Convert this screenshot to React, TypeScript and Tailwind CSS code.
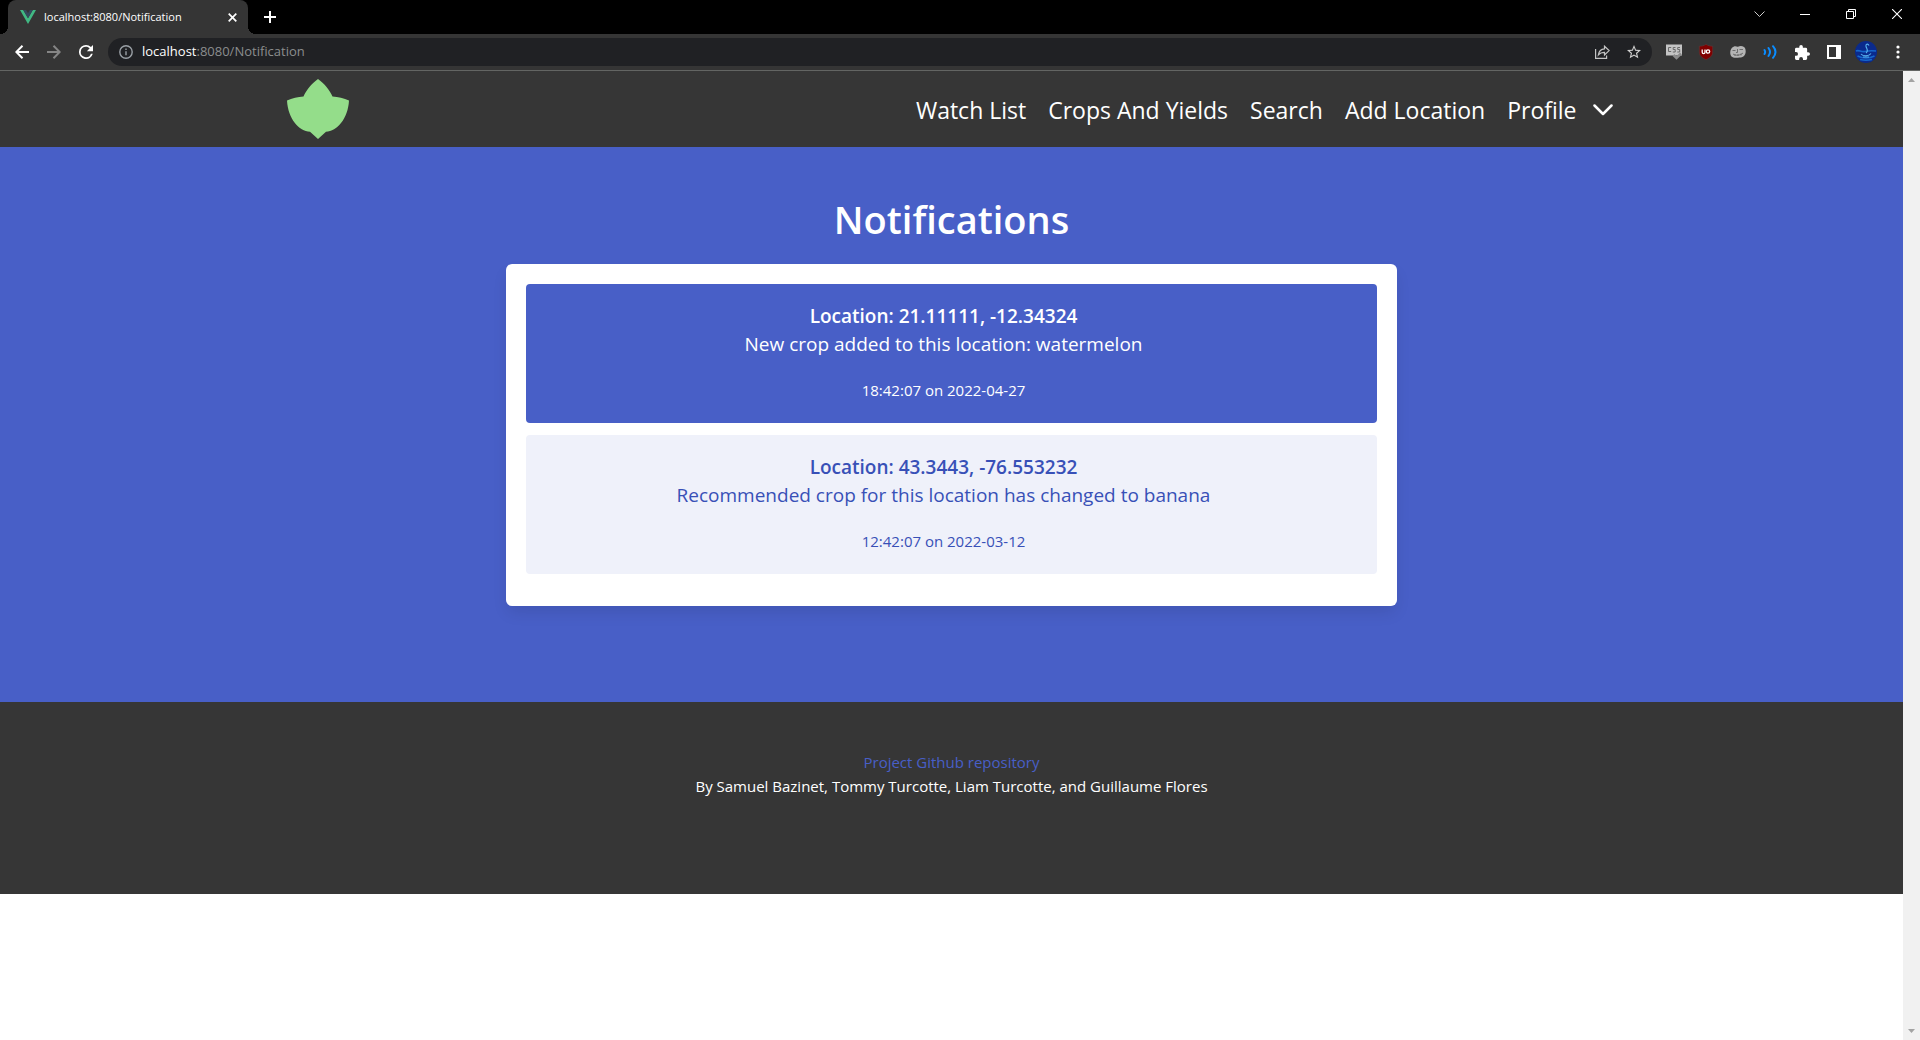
import React from "react";

function VueLogo() {
  return (
    <svg width="16" height="14" viewBox="0 0 16 14" aria-hidden="true">
      <path d="M0 0h3.2L8 8.3 12.8 0H16L8 14z" fill="#41b883" />
      <path d="M3.2 0H6.1L8 3.3 9.9 0h2.9L8 8.3z" fill="#35495e" />
    </svg>
  );
}

function TitleBar() {
  return (
    <header className="flex h-[34px] items-stretch bg-black text-white">
      <div className="relative ml-2 flex w-60 items-center rounded-t-lg bg-[#353535] pl-3">
        <span className="absolute -left-2 bottom-0 size-2 bg-[radial-gradient(circle_at_top_left,#000_8px,#353535_8px)]" />
        <span className="absolute -right-2 bottom-0 size-2 bg-[radial-gradient(circle_at_top_right,#000_8px,#353535_8px)]" />
        <VueLogo />
        <span className="ml-2 flex-1 text-[11px]">localhost:8080/Notification</span>
        <button aria-label="Close tab" className="mr-2 flex size-4 items-center justify-center">
          <svg width="9" height="9" viewBox="0 0 9 9" stroke="#fff" strokeWidth="1.7">
            <path d="M.7.7l7.6 7.6M8.3.7L.7 8.3" />
          </svg>
        </button>
      </div>
      <button aria-label="New tab" className="ml-3 flex w-5 items-center justify-center">
        <svg width="12" height="12" viewBox="0 0 12 12" stroke="#fff" strokeWidth="2">
          <path d="M6 0v12M0 6h12" />
        </svg>
      </button>
      <div className="ml-auto flex h-7 items-center">
        <button aria-label="Search tabs" className="flex w-[46px] justify-center">
          <svg width="11" height="6" viewBox="0 0 11 6" fill="none" stroke="#ccc">
            <path d="M.5.5l5 5 5-5" />
          </svg>
        </button>
        <button aria-label="Minimize" className="flex w-[46px] justify-center">
          <span className="h-px w-2.5 bg-white" />
        </button>
        <button aria-label="Restore" className="flex w-[46px] justify-center">
          <svg width="10" height="10" viewBox="0 0 10 10" fill="none" stroke="#fff">
            <path d="M.5 2.5h7v7h-7zM2.5 2.5v-2h7v7h-2" />
          </svg>
        </button>
        <button aria-label="Close" className="flex w-[46px] justify-center">
          <svg width="10" height="10" viewBox="0 0 10 10" stroke="#fff" strokeWidth="1.1">
            <path d="M0 0l10 10M10 0L0 10" />
          </svg>
        </button>
      </div>
    </header>
  );
}

function ToolButton({ label, children }: { label: string; children: React.ReactNode }) {
  return (
    <button aria-label={label} className="flex size-8 shrink-0 items-center justify-center">
      {children}
    </button>
  );
}

function Toolbar() {
  return (
    <div className="flex h-[37px] items-center border-b border-[#636563] bg-[#353535] pl-1.5 pr-1.5 text-[13px]">
      <ToolButton label="Back">
        <svg width="14" height="14" viewBox="0 0 14 14" fill="none" stroke="#fff" strokeWidth="2">
          <path d="M14 7H1.5M7.5.7L1.3 7l6.2 6.3" />
        </svg>
      </ToolButton>
      <ToolButton label="Forward">
        <svg width="14" height="14" viewBox="0 0 14 14" fill="none" stroke="#858585" strokeWidth="2">
          <path d="M0 7h12.5M6.5.7L12.7 7l-6.2 6.3" />
        </svg>
      </ToolButton>
      <ToolButton label="Reload">
        <svg width="14" height="14" viewBox="4 4 16 16" fill="#fff">
          <path d="M17.65 6.35A7.96 7.96 0 0 0 12 4a8 8 0 1 0 7.73 10h-2.08A6 6 0 1 1 12 6c1.66 0 3.14.69 4.22 1.78L13 11h7V4z" />
        </svg>
      </ToolButton>
      <div className="ml-1.5 mr-1.5 flex h-7 flex-1 items-center rounded-full bg-[#202124] pl-[11px] pr-0.5">
        <svg width="14" height="14" viewBox="0 0 14 14" fill="none" stroke="#9aa0a6" strokeWidth="1.4" aria-hidden="true">
          <circle cx="7" cy="7" r="6.2" />
          <path d="M7 6.2v4M7 3.5v1.5" />
        </svg>
        <div className="ml-[9px] flex-1 text-[#8b8d8e]">
          <span className="text-white">localhost</span>:8080/Notification
        </div>
        <ToolButton label="Share">
          <svg width="15" height="14" viewBox="0 0 15 14" fill="none" stroke="#c4c4c4" strokeWidth="1.2">
            <path d="M.6 4v9.4h11V10.500M9.500 1.200v2.600C6 4 4 6 3.400 9.800 5 8 7 7.300 9.500 7.400V10l4.600-4.400z" />
          </svg>
        </ToolButton>
        <ToolButton label="Bookmark">
          <svg width="14" height="14" viewBox="2 2 20 20" fill="#d0d0d0">
            <path d="M22 9.240l-7.190-.62L12 2 9.190 8.630 2 9.240l5.460 4.730L5.820 21 12 17.270 18.180 21l-1.630-7.030zM12 15.400l-3.760 2.270 1-4.280-3.320-2.880 4.380-.38L12 6.100l1.710 4.040 4.380.38-3.320 2.880 1 4.280z" />
          </svg>
        </ToolButton>
      </div>
      <ToolButton label="CSS viewer">
        <svg width="16" height="16" viewBox="0 0 16 16">
          <path d="M0 .5h16v11H0z" fill="#c4c4c4" />
          <path d="M7.500 11l3 3 4.500-4.500" fill="none" stroke="#8c8c8c" strokeWidth="2.600" />
          <path d="M5.200 3.500H2.500v4h2.700M9.500 3.500H7.200v2h2v2.500H6.800M14 3.500h-2.300v2h2v2.500h-2.400" fill="none" stroke="#6a6a6a" />
        </svg>
      </ToolButton>
      <ToolButton label="uBlock">
        <svg width="16" height="16" viewBox="0 0 16 16">
          <path d="M8 .3c2 1.400 4.300 1.900 6.700 1.900V8c0 4-2.800 5.800-6.700 7.700C4.100 13.800 1.300 12 1.300 8V2.200C3.700 2.200 6 1.700 8 .3z" fill="#800000" stroke="#5c3a3a" strokeWidth=".6" />
          <path d="M4.200 5.500v2.700a1.300 1.300 0 0 0 2.800 0V5.500" fill="none" stroke="#fff" strokeWidth="1.300" />
          <circle cx="10" cy="7.500" r="1.700" fill="none" stroke="#fff" strokeWidth="1.300" />
        </svg>
      </ToolButton>
      <ToolButton label="Mask">
        <svg width="16" height="12" viewBox="0 0 16 12">
          <path d="M4 .5C6 0 7 1 8 .7 9.500 0 12-.3 14 1c2.500 2 2 7 0 9-1.500 1.500-3 1.500-4.500 1.500-2 0-6 1-8-1S-.5 2 4 .5z" fill="#b4b4b4" />
          <path d="M2.500 4.500h3M9.500 3.500h3.500M7.500 3v3.500H6M3 8c3 2 7 1.500 10-1M8 8v2M11 7.500v2M5 8v2" fill="none" stroke="#666" strokeWidth=".9" />
        </svg>
      </ToolButton>
      <ToolButton label="Audio">
        <svg width="14" height="14" viewBox="0 0 14 14" fill="none" stroke="#0a8cff" strokeWidth="2" strokeLinecap="round">
          <path d="M1.500 5q1.300 2 0 4M5.500 3q3 4 0 8M10 1.200q5 5.800 0 11.600" />
        </svg>
      </ToolButton>
      <ToolButton label="Extensions">
        <svg width="15" height="15" viewBox="2 1 21 21" fill="#fff">
          <path d="M20.500 11H19V7a2 2 0 0 0-2-2h-4V3.500a2.500 2.500 0 0 0-5 0V5H4a2 2 0 0 0-2 2v3.800h1.500a2.700 2.700 0 0 1 0 5.400H2V20a2 2 0 0 0 2 2h3.800v-1.500a2.700 2.700 0 0 1 5.400 0V22H17a2 2 0 0 0 2-2v-4h1.500a2.500 2.500 0 0 0 0-5z" />
        </svg>
      </ToolButton>
      <ToolButton label="Side panel">
        <svg width="14" height="14" viewBox="0 0 14 14">
          <path d="M0 0h14v14H0zM2 2v10h7V2z" fill="#fff" fillRule="evenodd" />
        </svg>
      </ToolButton>
      <ToolButton label="Account">
        <svg width="22" height="22" viewBox="0 0 22 22">
          <circle cx="11" cy="11" r="11" fill="#0a2a8c" />
          <path d="M1 10c3-1.500 5 1.500 9 .5s7-1 11-.5M2.500 15c5 2.500 12 2.500 17 0M5 18.500c4 1 8 1 12 0" fill="none" stroke="#1668cc" strokeWidth="1.600" />
          <path d="M11 12c3-2 .5-4.500 0-6.500s1.500-3.500 3-1M6 13c2 2.500 8 2.500 10-.5M8 16h6" fill="none" stroke="#58b4f0" strokeWidth="1.100" />
        </svg>
      </ToolButton>
      <ToolButton label="Menu">
        <svg width="4" height="14" viewBox="0 0 4 14" fill="#fff">
          <circle cx="2" cy="2" r="1.600" />
          <circle cx="2" cy="7" r="1.600" />
          <circle cx="2" cy="12" r="1.600" />
        </svg>
      </ToolButton>
    </div>
  );
}

const NAV_LINKS = ["Watch List", "Crops And Yields", "Search", "Add Location"];

function NavBar() {
  return (
    <nav className="bg-[#363636] text-white">
      <div className="mx-auto flex h-19 max-w-[1344px] items-center justify-between">
        <a href="#" aria-label="Home" className="pl-1.5">
          <svg width="64" height="60" viewBox="0 0 64 60" fill="#94dd8a">
            <path d="M32 0C39 5 43.500 11 46.500 17.500 52 18 58 19 63 21.500 62 40 51 52 40 52.700L32 60l-8-7.300C13 52 2 40 1 21.500 6 19 12 18 17.500 17.500 20.500 11 25 5 32 0z" />
          </svg>
        </a>
        <div className="flex items-center pt-0.5 text-[23px]">
          {NAV_LINKS.map((label) => (
            <a key={label} href="#" className="px-[11px]">
              {label}
            </a>
          ))}
          <button className="flex items-center gap-4 px-[11px]">
            Profile
            <svg width="20" height="12" viewBox="0 0 20 12" fill="none" stroke="#fff" strokeWidth="2.500" strokeLinecap="round" strokeLinejoin="round">
              <path d="M1.500 1.500L10 10l8.500-8.500" />
            </svg>
          </button>
        </div>
      </div>
    </nav>
  );
}

type NotificationProps = { location: string; message: string; time: string; className: string };

function Notification({ location, message, time, className }: NotificationProps) {
  return (
    <article className={`mb-3 rounded pt-[18px] pr-10 pb-5 pl-6 text-center ${className}`}>
      <h2 className="text-[19px] leading-7 font-semibold">Location: {location}</h2>
      <p className="text-[19px] leading-7">{message}</p>
      <p className="mt-5 text-[15px] leading-[25px]">{time}</p>
    </article>
  );
}

export default function App() {
  return (
    <div className="flex h-screen flex-col overflow-hidden bg-white font-['Open_Sans','Noto_Sans',sans-serif]">
      <TitleBar />
      <Toolbar />
      <div className="flex min-h-0 flex-1">
        <div className="min-w-0 flex-1">
          <NavBar />
          <main className="bg-[#485fc7] px-6 pt-12 pb-24">
            <h1 className="mb-5 text-center text-[38px] leading-[49px] font-semibold text-white">Notifications</h1>
            <div className="mx-auto w-[calc(50%-36px)] rounded-md bg-white p-5 shadow-[0_8px_16px_-2px_rgba(10,10,10,0.1)]">
              <Notification
                location="21.11111, -12.34324"
                message="New crop added to this location: watermelon"
                time="18:42:07 on 2022-04-27"
                className="bg-[#485fc7] text-white"
              />
              <Notification
                location="43.3443, -76.553232"
                message="Recommended crop for this location has changed to banana"
                time="12:42:07 on 2022-03-12"
                className="bg-[#eff1fa] text-[#3850b7]"
              />
            </div>
          </main>
          <footer className="bg-[#363636] px-6 pt-12 pb-24 text-center text-[15px] leading-6 text-white">
            <p>
              <a href="#" className="text-[#485fc7]">
                Project Github repository
              </a>
            </p>
            <p>By Samuel Bazinet, Tommy Turcotte, Liam Turcotte, and Guillaume Flores</p>
          </footer>
        </div>
        <div aria-hidden="true" className="flex w-[17px] flex-col items-center justify-between bg-[#f1f1f1] py-[7px]">
          <svg width="7" height="4" viewBox="0 0 7 4" fill="#a3a3a3">
            <path d="M0 4l3.500-4L7 4z" />
          </svg>
          <svg width="7" height="4" viewBox="0 0 7 4" fill="#505050">
            <path d="M0 0l3.500 4L7 0z" fill="#a3a3a3" />
          </svg>
        </div>
      </div>
    </div>
  );
}
